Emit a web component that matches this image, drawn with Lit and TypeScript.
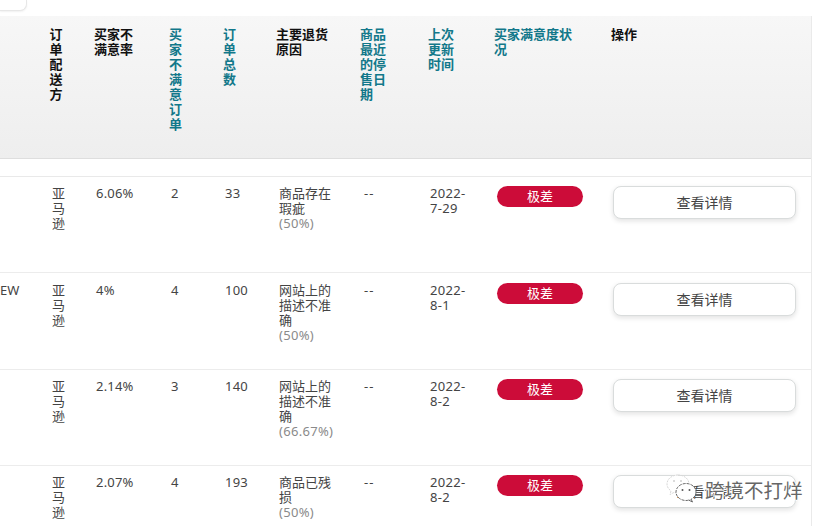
import { LitElement, html, css, svg } from "lit";
import { customElement } from "lit/decorators.js";

const heads: [string, boolean][] = [
  ["", false],
  ["订单配送方", false],
  ["买家不满意率", false],
  ["买家不满意订单", true],
  ["订单总数", true],
  ["主要退货原因", false],
  ["商品最近的停售日期", true],
  ["上次更新时间", true],
  ["买家满意度状况", true],
  ["操作", false],
];

const rows = [
  { id: "", rate: "6.06%", n: "2", total: "33", reason: "商品存在瑕疵", pct: "(50%)", date: "2022-7-29" },
  { id: "EW", rate: "4%", n: "4", total: "100", reason: "网站上的描述不准确", pct: "(50%)", date: "2022-8-1" },
  { id: "", rate: "2.14%", n: "3", total: "140", reason: "网站上的描述不准确", pct: "(66.67%)", date: "2022-8-2" },
  { id: "", rate: "2.07%", n: "4", total: "193", reason: "商品已残损", pct: "(50%)", date: "2022-8-2" },
];

@customElement("app-root")
export class AppRoot extends LitElement {
  static styles = css`
    :host {
      display: block;
      width: 830px;
      height: 526px;
      overflow: hidden;
      position: relative;
      background: #fff;
      font-family: "Noto Sans", "Noto Sans CJK SC", sans-serif;
      font-size: 13px;
      line-height: 15px;
      color: #444;
    }
    .top { height: 16px; }
    .chip {
      width: 26px;
      height: 10px;
      background: #fff;
      border: 1px solid #e7e7e7;
      border-width: 0 1px 1px 0;
      border-radius: 0 0 7px 0;
      box-shadow: 0 1px 2px rgba(0, 0, 0, 0.06);
    }
    .table {
      width: 811px;
      border-right: 1px solid #eaeaea;
    }
    .grid {
      display: grid;
      grid-template-columns: 50px 44px 75px 54px 53px 84px 68px 66px 117px 200px;
    }
    .head {
      grid-template-columns: 49.5px 44.5px 75px 54px 53px 84px 68px 66px 117px 200px;
      height: 143px;
      box-sizing: border-box;
      padding-top: 11px;
      background: linear-gradient(#f7f7f7, #eeeeee);
      border-bottom: 1px solid #dedede;
      font-weight: 700;
      color: #111;
    }
    .head .teal { color: #12788a; }
    .hc { word-break: break-all; }
    .hc:nth-child(2) { width: 14px; }
    .hc:nth-child(3) { width: 42px; }
    .hc:nth-child(4), .hc:nth-child(5) { width: 14px; }
    .hc:nth-child(6) { width: 54px; }
    .hc:nth-child(7), .hc:nth-child(8) { width: 27px; }
    .hc:nth-child(9) { width: 80px; }
    .spacer {
      height: 18px;
      box-sizing: border-box;
      border-bottom: 1px solid #e9e9e9;
    }
    .row {
      height: 96.33px;
      box-sizing: border-box;
      padding-top: 9.3px;
      border-bottom: 1px solid #ececec;
    }
    .cell { padding-left: 2px; min-width: 0; }
    .id { padding-left: 0; }
    .ship { width: 14px; word-break: break-all; }
    .num { letter-spacing: 0.2px; }
    .reason { padding-left: 3px; }
    .reason span { display: block; width: 54px; word-break: break-all; }
    .reason .pct { color: #8a8a8a; white-space: nowrap; letter-spacing: 0.3px; }
    .dash { padding-left: 4px; letter-spacing: 1px; }
    .date { width: 38px; overflow-wrap: anywhere; letter-spacing: 0.3px; }
    .pill {
      margin-left: 3px;
      width: 86px;
      height: 21px;
      border-radius: 11px;
      background: #cc0c39;
      color: #fff;
      display: flex;
      align-items: center;
      justify-content: center;
    }
    .btn {
      margin-left: 2px;
      width: 183px;
      height: 33px;
      box-sizing: border-box;
      padding: 0;
      border: 1px solid #d9dcdc;
      border-radius: 8px;
      background: #fff;
      box-shadow: 0 2px 5px rgba(15, 17, 17, 0.12);
      display: flex;
      align-items: center;
      justify-content: center;
      font-family: inherit;
      font-size: 14px;
      line-height: 15px;
      color: #444;
    }
    .mark {
      position: absolute;
      left: 666px;
      top: 474px;
      display: flex;
      align-items: center;
      gap: 8px;
      pointer-events: none;
    }
    .mark svg { display: block; }
    .mark span {
      font-size: 19.5px;
      line-height: 26px;
      color: #666;
      text-shadow: 1px 0 0 #fff, -1px 0 0 #fff, 0 1px 0 #fff, 0 -1px 0 #fff;
      margin-top: 4px;
    }
  `;

  private icon() {
    return svg`<svg width="31" height="30" viewBox="0 0 31 30" fill="none">
      <path d="M12 1C5.9 1 1 5 1 10c0 2.8 1.5 5.2 4 6.9L4 20.5l4.2-2.2c1.2.4 2.5.6 3.8.6" fill="#fff" stroke="#d8d8d8" stroke-width="1" stroke-dasharray="2 1"/>
      <path d="M12 1c5.6 0 10.2 3.4 10.9 7.8" stroke="#d8d8d8" stroke-width="1" stroke-dasharray="2 1"/>
      <circle cx="8" cy="7" r="1" fill="#cfcfcf"/><circle cx="15" cy="7" r="1" fill="#cfcfcf"/>
      <ellipse cx="20" cy="18" rx="10" ry="8.5" fill="#fff" stroke="#6a6a6a" stroke-width="1" stroke-dasharray="3 1"/>
      <path d="M25 25l1.5 3-4-2" fill="#fff" stroke="#6a6a6a" stroke-width="1"/>
      <circle cx="16.5" cy="16" r="1" fill="#555"/><circle cx="23.5" cy="16" r="1" fill="#555"/>
    </svg>`;
  }

  render() {
    return html`
      <div class="top"><div class="chip"></div></div>
      <div class="table">
        <div class="grid head">
          ${heads.map(([t, teal]) => html`<div class="hc ${teal ? "teal" : ""}">${t}</div>`)}
        </div>
        <div class="spacer"></div>
        ${rows.map(
          (r) => html`
            <div class="grid row">
              <div class="cell id">${r.id}</div>
              <div class="cell"><div class="ship">亚马逊</div></div>
              <div class="cell num">${r.rate}</div>
              <div class="cell num">${r.n}</div>
              <div class="cell num">${r.total}</div>
              <div class="cell reason"><span>${r.reason}</span><span class="pct">${r.pct}</span></div>
              <div class="cell dash">--</div>
              <div class="cell"><div class="date">${r.date}</div></div>
              <div><div class="pill">极差</div></div>
              <div><button class="btn">查看详情</button></div>
            </div>
          `
        )}
      </div>
      <div class="mark">${this.icon()}<span>跨境不打烊</span></div>
    `;
  }
}
